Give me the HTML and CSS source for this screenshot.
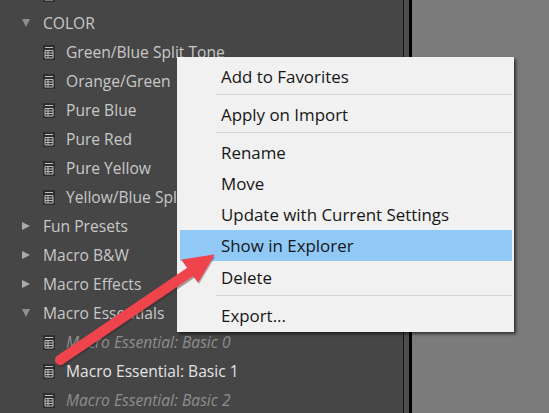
FILE: index.html
```html
<!DOCTYPE html>
<html lang="en">
<head>
<meta charset="utf-8">
<title>Presets</title>
<link rel="stylesheet" href="styles.css">
</head>
<body>
<svg width="0" height="0" class="defs"><defs>
<symbol id="doc" viewBox="0 0 12 15">
<rect x="0" y="0" width="12" height="15" fill="#2e2e2e"/>
<path d="M2 2.5h8M2 5.5h8v7.5h-8zM2 8h8M2 10.5h8M5 5.5v7.5" fill="none" stroke="#bdbdbd" stroke-width="1"/>
</symbol>
</defs></svg>
<div class="app">
  <aside class="panel">
    <ul class="tree">
      <li class="row child"><svg class="doc"><use href="#doc"/></svg><span></span></li>
      <li class="row"><i class="tri down"></i><span class="group">COLOR</span></li>
      <li class="row child"><svg class="doc"><use href="#doc"/></svg><span>Green/Blue Split Tone</span></li>
      <li class="row child"><svg class="doc"><use href="#doc"/></svg><span>Orange/Green</span></li>
      <li class="row child"><svg class="doc"><use href="#doc"/></svg><span>Pure Blue</span></li>
      <li class="row child"><svg class="doc"><use href="#doc"/></svg><span>Pure Red</span></li>
      <li class="row child"><svg class="doc"><use href="#doc"/></svg><span>Pure Yellow</span></li>
      <li class="row child"><svg class="doc"><use href="#doc"/></svg><span>Yellow/Blue Split Tone</span></li>
      <li class="row"><i class="tri"></i><span class="group">Fun Presets</span></li>
      <li class="row"><i class="tri"></i><span class="group">Macro B&amp;W</span></li>
      <li class="row"><i class="tri"></i><span class="group">Macro Effects</span></li>
      <li class="row"><i class="tri down"></i><span class="group">Macro Essentials</span></li>
      <li class="row child dim"><svg class="doc"><use href="#doc"/></svg><span>Macro Essential: Basic 0</span></li>
      <li class="row child active"><svg class="doc"><use href="#doc"/></svg><span>Macro Essential: Basic 1</span></li>
      <li class="row child dim"><svg class="doc"><use href="#doc"/></svg><span>Macro Essential: Basic 2</span></li>
    </ul>
  </aside>
  <div class="rule"></div>
  <main class="canvas"></main>
</div>
<ul class="menu">
  <li class="item">Add to Favorites</li>
  <li class="sep"></li>
  <li class="item">Apply on Import</li>
  <li class="sep"></li>
  <li class="item">Rename</li>
  <li class="item">Move</li>
  <li class="item">Update with Current Settings</li>
  <li class="item hot">Show in Explorer</li>
  <li class="item">Delete</li>
  <li class="sep"></li>
  <li class="item">Export...</li>
</ul>
<svg class="arrow" width="549" height="413" viewBox="0 0 549 413">
  <path d="M60 360 L196 268" stroke="#3a2022" stroke-opacity=".4" stroke-width="10" stroke-linecap="round" transform="translate(1 2)"/>
  <path d="M214 255 L182 260 L198 282 Z" fill="#3a2022" fill-opacity=".35" transform="translate(1 2)"/>
  <path d="M60 360 L196 268" stroke="#f0444d" stroke-width="10" stroke-linecap="round"/>
  <path d="M214 255 L182 260 L198 282 Z" fill="#f0444d" stroke="#f0444d" stroke-width="1" stroke-linejoin="round"/>
</svg>
</body>
</html>
```
FILE: styles.css
```css
* { box-sizing: border-box; }
html, body { margin: 0; padding: 0; width: 549px; height: 413px; overflow: hidden; }
body { position: relative; background: #7b7b7b; font-family: "Open Sans", "Noto Sans", sans-serif; }
.defs { position: absolute; }
.app { display: flex; height: 413px; }
.panel { width: 404px; height: 413px; overflow: hidden; background: #464646; border-right: 1px solid #141414; flex: none; }
.rule { width: 8px; flex: none; background: linear-gradient(90deg, #4d4d4d 0 5px, #000 5px); }
.canvas { flex: 1; background: #7b7b7b; }
.tree { list-style: none; margin: -20.5px 0 0; padding: 0 0 0 22px; color: #c8c8c8; font-size: 15.6px; }
.row { height: 29px; display: flex; align-items: center; white-space: nowrap; }
.child { padding-left: 21px; }
.doc { width: 12px; height: 15px; margin-right: 11px; flex: none; }
.tri { width: 0; height: 0; margin-right: 13px; flex: none; border-style: solid; border-width: 4px 0 4px 8px; border-color: transparent transparent transparent #ababab; }
.tri.down { border-width: 8px 4px 0; border-color: #8f8f8f transparent transparent; }
.dim { color: #8e8e8e; font-style: italic; }
.active { color: #e4e4e4; }
.menu { position: absolute; left: 177px; top: 57px; width: 337px; height: 275px; margin: 0; padding: 4px 2px 0 3px; list-style: none; background: #f1f1f1; box-shadow: 2px 2px 3px rgba(0,0,0,.6); color: #161616; font-size: 16.9px; }
.item { height: 30.8px; padding-left: 41px; display: flex; align-items: center; white-space: nowrap; }
.hot { background: #90c8f6; margin-bottom: 1px; }
.sep { height: 1px; margin: 2px 0 4.5px 36px; background: #d6d6d6; }
.arrow { position: absolute; left: 0; top: 0; pointer-events: none; }
```
